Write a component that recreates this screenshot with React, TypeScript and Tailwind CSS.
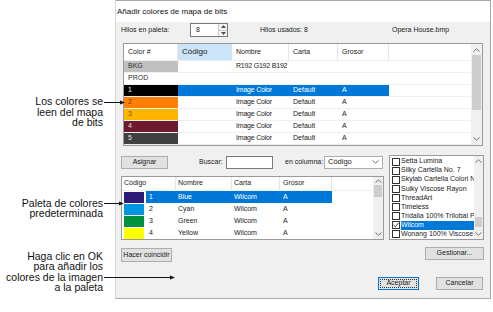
import { ReactNode } from "react";

function Chevron({ dir }: { dir: "up" | "down" }) {
  return (
    <svg width="7" height="4" viewBox="0 0 7 4">
      <path
        d={dir === "up" ? "M0.5 3.5 L3.5 0.8 L6.5 3.5" : "M0.5 0.5 L3.5 3.2 L6.5 0.5"}
        fill="none"
        stroke="#707070"
        strokeWidth="1"
      />
    </svg>
  );
}

function Button({ children, className }: { children: ReactNode; className: string }) {
  return (
    <div
      className={
        "flex items-center justify-center whitespace-nowrap bg-[#e1e1e1] border border-[#adadad] text-[7px] text-[#1a1a1a] " +
        className
      }
    >
      {children}
    </div>
  );
}

const topRows = [
  { label: "BKG", bg: "bg-[#c0c0c0]", fg: "text-[#333]", nombre: "R192 G192 B192", carta: "", grosor: "" },
  { label: "PROD", bg: "bg-white", fg: "text-[#333]", nombre: "", carta: "", grosor: "" },
  { label: "1", bg: "bg-black", fg: "text-white", nombre: "Image Color", carta: "Default", grosor: "A", sel: true },
  { label: "2", bg: "bg-[#ff8000]", fg: "text-[#7a3a00]", nombre: "Image Color", carta: "Default", grosor: "A" },
  { label: "3", bg: "bg-[#ffb400]", fg: "text-[#7a5600]", nombre: "Image Color", carta: "Default", grosor: "A" },
  { label: "4", bg: "bg-[#6e1a2c]", fg: "text-[#e8d0d4]", nombre: "Image Color", carta: "Default", grosor: "A" },
  { label: "5", bg: "bg-[#404040]", fg: "text-[#e0e0e0]", nombre: "Image Color", carta: "Default", grosor: "A" },
];

const bottomRows = [
  { code: "1", swatch: "bg-[#2d1a78]", nombre: "Blue", sel: true },
  { code: "2", swatch: "bg-[#0096e0]", nombre: "Cyan" },
  { code: "3", swatch: "bg-[#00923f]", nombre: "Green" },
  { code: "4", swatch: "bg-[#ffff00]", nombre: "Yellow" },
];

const charts = [
  "Setta Lumina",
  "Silky Cartella No. 7",
  "Skylab Cartella Colori No",
  "Sulky Viscose Rayon",
  "ThreadArt",
  "Timeless",
  "Tridalia 100% Trilobal Po",
  "Wilcom",
  "Wonang 100% Viscose Ra",
];

export default function App() {
  return (
    <div className="relative w-[493px] h-[312px] bg-white flex font-['Liberation_Sans',Arial,sans-serif] overflow-hidden">
      {/* notas a la izquierda */}
      <div className="w-[115px] flex flex-col items-end pr-[12px] pt-[96px] text-[10.5px] leading-[10.5px] text-right text-[#111]">
        <div>
          Los colores se
          <br />
          leen del mapa
          <br />
          de bits
        </div>
        <div className="mt-[70px]">
          Paleta de colores
          <br />
          predeterminada
        </div>
        <div className="mt-[32px]">
          Haga clic en OK
          <br />
          para añadir los
          <br />
          colores de la imagen
          <br />a la paleta
        </div>
      </div>

      {/* dialogo */}
      <div className="w-[376px] h-[299px] flex flex-col border border-[#a8a8a8] border-l-[#d8d8d8]">
        <div className="h-[21px] bg-white flex items-center pl-[1px] text-[8px] text-[#111]">
          Añadir colores de mapa de bits
        </div>
        <div className="flex-1 bg-[#f0f0f0] pl-[5px] pr-[6px] pt-[1px] text-[7px] text-[#1a1a1a] whitespace-nowrap">
          {/* fila superior */}
          <div className="h-[14px] flex items-center">
            <div className="w-[69px]">Hilos en paleta:</div>
            <div className="w-[38px] h-[14px] flex bg-white border border-[#7a7a7a]">
              <div className="flex-1 flex items-center pl-[5px]">8</div>
              <div className="w-[9px] flex flex-col border-l border-[#c8c8c8] bg-[#f4f4f4]">
                <div className="flex-1 flex items-center justify-center border-b border-[#c8c8c8]">
                  <svg width="5" height="3" viewBox="0 0 5 3">
                    <path d="M0 3 L2.5 0 L5 3 Z" fill="#505050" />
                  </svg>
                </div>
                <div className="flex-1 flex items-center justify-center">
                  <svg width="5" height="3" viewBox="0 0 5 3">
                    <path d="M0 0 L2.5 3 L5 0 Z" fill="#505050" />
                  </svg>
                </div>
              </div>
            </div>
            <div className="ml-[32px] w-[132px]">Hilos usados: 8</div>
            <div>Opera House.bmp</div>
          </div>

          {/* tabla de colores del mapa de bits */}
          <div className="mt-[6px] ml-[2px] w-[360px] h-[103px] flex bg-white border border-[#9a9a9a]">
            <div className="flex-1 flex flex-col overflow-hidden">
              <div className="h-[17px] flex border-b border-[#f0f0f0]">
                <div className="w-[54px] pl-[4px] flex items-center border-r border-[#e5e5e5]">Color #</div>
                <div className="w-[54px] pl-[4px] flex items-center bg-[#cce4f7] text-[8px]">Código</div>
                <div className="w-[57px] pl-[4px] flex items-center border-r border-[#e5e5e5]">Nombre</div>
                <div className="w-[49px] pl-[4px] flex items-center border-r border-[#e5e5e5]">Carta</div>
                <div className="w-[51px] pl-[4px] flex items-center border-r border-[#e5e5e5]">Grosor</div>
                <div className="flex-1" />
              </div>
              {topRows.map((r) => (
                <div key={r.label} className="h-[12px] flex border-b border-[#f0f0f0]">
                  <div className={"w-[54px] pl-[4px] flex items-center " + r.bg + " " + r.fg}>{r.label}</div>
                  <div className={"flex " + (r.sel ? "bg-[#0078d7] text-white" : "")}>
                    <div className="w-[54px]" />
                    <div className="w-[57px] pl-[4px] flex items-center tracking-[-0.2px]">{r.nombre}</div>
                    <div className="w-[49px] pl-[4px] flex items-center">{r.carta}</div>
                    <div className="w-[51px] pl-[4px] flex items-center">{r.grosor}</div>
                  </div>
                  <div className="flex-1" />
                </div>
              ))}
            </div>
            <div className="w-[11px] flex flex-col bg-[#f0f0f0]">
              <div className="h-[11px] flex items-center justify-center">
                <Chevron dir="up" />
              </div>
              <div className="h-[55px] mx-[1px] bg-[#cdcdcd]" />
              <div className="flex-1" />
              <div className="h-[12px] flex items-center justify-center">
                <Chevron dir="down" />
              </div>
            </div>
          </div>

          {/* parte inferior */}
          <div className="mt-[9px] flex">
            <div className="w-[263px] flex flex-col">
              <div className="h-[14px] flex items-center">
                <Button className="w-[47px] h-[13px] mt-[1px]">Asignar</Button>
                <div className="ml-[31px] w-[27px]">Buscar:</div>
                <div className="w-[47px] h-[13px] bg-white border border-[#7a7a7a]" />
                <div className="ml-[12px] w-[39px]">en columna:</div>
                <div className="w-[59px] h-[13px] flex items-center justify-between px-[3px] bg-white border border-[#adadad]">
                  <span className="text-[7.5px]">Código</span>
                  <Chevron dir="down" />
                </div>
              </div>

              <div className="mt-[7px] h-[64px] flex bg-white border border-[#9a9a9a]">
                <div className="flex-1 flex flex-col">
                  <div className="h-[14px] flex border-b border-[#f0f0f0]">
                    <div className="w-[54px] pl-[2px] flex items-center border-r border-[#e5e5e5]">Código</div>
                    <div className="w-[56px] pl-[2px] flex items-center border-r border-[#e5e5e5]">Nombre</div>
                    <div className="w-[48px] pl-[2px] flex items-center border-r border-[#e5e5e5]">Carta</div>
                    <div className="w-[52px] pl-[3px] flex items-center border-r border-[#e5e5e5]">Grosor</div>
                    <div className="flex-1" />
                  </div>
                  {bottomRows.map((r) => (
                    <div key={r.code} className="h-[12px] flex">
                      <div className="w-[24px] pl-[2px] py-[0.5px] flex">
                        <div className={"w-[20px] h-full " + r.swatch} />
                      </div>
                      <div className={"flex " + (r.sel ? "bg-[#0078d7] text-white" : "")}>
                        <div className="w-[30px] pl-[3px] flex items-center">{r.code}</div>
                        <div className="w-[56px] pl-[2px] flex items-center">{r.nombre}</div>
                        <div className="w-[48px] pl-[2px] flex items-center">Wilcom</div>
                        <div className="w-[52px] pl-[3px] flex items-center">A</div>
                      </div>
                      <div className="flex-1" />
                    </div>
                  ))}
                </div>
                <div className="w-[10px] flex flex-col bg-[#f0f0f0]">
                  <div className="h-[8px] flex items-center justify-center">
                    <Chevron dir="up" />
                  </div>
                  <div className="h-[12px] mx-[1px] bg-[#cdcdcd]" />
                  <div className="flex-1" />
                  <div className="h-[10px] flex items-center justify-center">
                    <Chevron dir="down" />
                  </div>
                </div>
              </div>

              <Button className="mt-[8px] w-[51px] h-[14px]">Hacer coincidir</Button>
            </div>

            <div className="ml-[5px] w-[95px] flex flex-col">
              <div className="h-[85px] flex bg-white border border-[#9a9a9a]">
                <div className="flex-1 flex flex-col pt-[1px] overflow-hidden">
                  {charts.map((c) => (
                    <div key={c} className="h-[9.1px] flex items-center pl-[2px] whitespace-nowrap">
                      <div className="w-[8px] h-[8px] shrink-0 bg-white border border-[#333] flex items-center justify-center">
                        {c === "Wilcom" && (
                          <svg width="6" height="6" viewBox="0 0 6 6">
                            <path d="M0.6 3.2 L2.3 4.8 L5.5 1" fill="none" stroke="#222" strokeWidth="0.9" />
                          </svg>
                        )}
                      </div>
                      <div
                        className={
                          "ml-[1px] h-full flex items-center " +
                          (c === "Wilcom" ? "flex-1 bg-[#0078d7] text-white" : "")
                        }
                      >
                        {c}
                      </div>
                    </div>
                  ))}
                </div>
                <div className="w-[9px] flex flex-col bg-[#f0f0f0]">
                  <div className="h-[10px] flex items-center justify-center">
                    <Chevron dir="up" />
                  </div>
                  <div className="h-[51px]" />
                  <div className="h-[10px] mx-[1px] bg-[#cdcdcd]" />
                  <div className="flex-1" />
                  <div className="h-[11px] flex items-center justify-center">
                    <Chevron dir="down" />
                  </div>
                </div>
              </div>
              <div className="mt-[7px] flex justify-end">
                <Button className="w-[59px] h-[13px]">Gestionar...</Button>
              </div>
            </div>
          </div>

          {/* botones */}
          <div className="mt-[15px] flex justify-end pr-[1px] gap-[17px]">
            <div className="w-[41px] h-[13px] p-[1px] bg-[#e1e1e1] border border-[#0078d7]">
              <div className="w-full h-full flex items-center justify-center border border-dotted border-[#333] text-[7px]">
                Aceptar
              </div>
            </div>
            <Button className="w-[47px] h-[13px]">Cancelar</Button>
          </div>
        </div>
      </div>

      {/* flechas de las notas */}
      <svg className="absolute left-0 top-0 pointer-events-none" width="493" height="312">
        <g stroke="#111" strokeWidth="1">
          <line x1="104" y1="102.5" x2="122" y2="102.5" />
          <line x1="104" y1="203.5" x2="121" y2="203.5" />
          <line x1="104" y1="277.5" x2="172" y2="277.5" />
        </g>
        <g fill="#111">
          <path d="M125 102.5 L120 100.5 L120 104.5 Z" />
          <path d="M124 203.5 L119 201.5 L119 205.5 Z" />
          <path d="M175 277.5 L170 275.5 L170 279.5 Z" />
        </g>
      </svg>
    </div>
  );
}
